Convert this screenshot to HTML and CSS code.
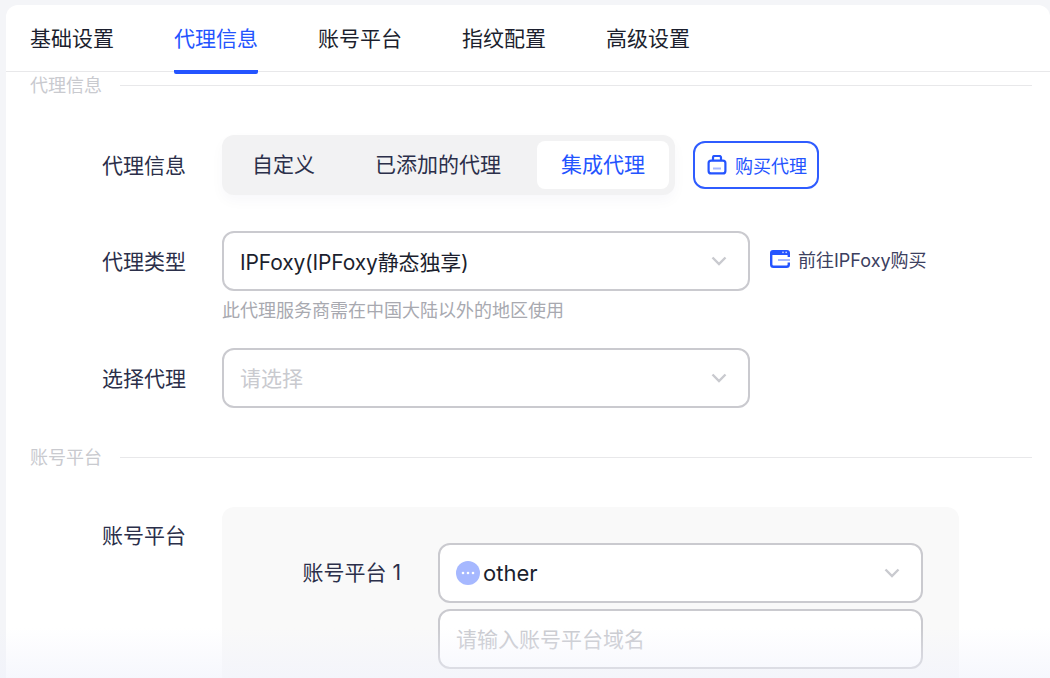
FILE: index.html
```html
<!DOCTYPE html>
<html lang="zh">
<head>
<meta charset="utf-8">
<title>代理信息</title>
<link rel="stylesheet" href="styles.css">
</head>
<body>
<main class="card">
  <nav class="tabs">
    <a class="tab">基础设置</a>
    <a class="tab active">代理信息</a>
    <a class="tab">账号平台</a>
    <a class="tab">指纹配置</a>
    <a class="tab">高级设置</a>
  </nav>
  <div class="content">
    <div class="divider first"><span>代理信息</span></div>
    <div class="row row-seg">
      <label class="label">代理信息</label>
      <div class="segment">
        <span class="seg seg-a">自定义</span>
        <span class="seg seg-b">已添加的代理</span>
        <span class="seg seg-c on">集成代理</span>
      </div>
      <button class="buy">
        <svg class="icon" width="20" height="20" viewBox="0 0 20 20" fill="none">
          <path d="M6 6V2.500A1.500 1.500 0 0 1 7.500 1h5A1.500 1.500 0 0 1 14 2.500V6" stroke="#2454ff" stroke-width="2.200"/>
          <rect x="1.600" y="5.600" width="16.800" height="12.800" rx="2.500" stroke="#2454ff" stroke-width="2.200"/>
          <rect x="6" y="12.500" width="8" height="2" fill="#a6b8ff"/>
        </svg>
        购买代理
      </button>
    </div>
    <div class="row row-type">
      <label class="label">代理类型</label>
      <div class="select">
        <span class="value tight">IPFoxy(IPFoxy静态独享)</span>
        <svg class="chev" width="16" height="10" viewBox="0 0 16 10" fill="none"><path d="M1.500 1.500 8 8l6.500-6.500" stroke="#c9cacf" stroke-width="2.400"/></svg>
      </div>
      <a class="goto">
        <svg class="icon" width="20" height="18" viewBox="0 0 20 18" fill="none">
          <path d="M1.200 3.500V14.500a2.300 2.300 0 0 0 2.300 2.300h13a2.300 2.300 0 0 0 2.300-2.300v-2" stroke="#2454ff" stroke-width="2.400"/>
          <path d="M18.800 4v3" stroke="#2454ff" stroke-width="2.400"/>
          <path d="M0 3a3 3 0 0 1 3-3h14a3 3 0 0 1 3 3v2H0z" fill="#2454ff"/>
          <circle cx="13" cy="2.300" r="0.900" fill="#c5d1ff"/>
          <circle cx="16.200" cy="2.300" r="0.900" fill="#c5d1ff"/>
          <rect x="8" y="9" width="12" height="2" fill="#a6b8ff"/>
        </svg>
        前往IPFoxy购买
      </a>
    </div>
    <p class="hint">此代理服务商需在中国大陆以外的地区使用</p>
    <div class="row row-pick">
      <label class="label">选择代理</label>
      <div class="select">
        <span class="placeholder">请选择</span>
        <svg class="chev" width="16" height="10" viewBox="0 0 16 10" fill="none"><path d="M1.500 1.500 8 8l6.500-6.500" stroke="#c9cacf" stroke-width="2.400"/></svg>
      </div>
    </div>
    <div class="divider second"><span>账号平台</span></div>
    <div class="row row-platform">
      <label class="label label-top">账号平台</label>
      <div class="panel">
        <div class="panel-row">
          <label class="sublabel">账号平台 1</label>
          <div class="stack">
            <div class="select small">
              <span class="value with-icon">
                <svg class="icon" width="24" height="24" viewBox="0 0 24 24"><circle cx="12" cy="12" r="12" fill="#a6b8ff"/><circle cx="7" cy="12" r="1.300" fill="#fff"/><circle cx="12" cy="12" r="1.300" fill="#fff"/><circle cx="17" cy="12" r="1.300" fill="#fff"/></svg>
                other
              </span>
              <svg class="chev" width="16" height="10" viewBox="0 0 16 10" fill="none"><path d="M1.500 1.500 8 8l6.500-6.500" stroke="#c9cacf" stroke-width="2.400"/></svg>
            </div>
            <div class="select small"><span class="placeholder">请输入账号平台域名</span></div>
          </div>
        </div>
      </div>
    </div>
  </div>
</main>
<div class="fade"></div>
</body>
</html>
```
FILE: styles.css
```css
* { box-sizing: border-box; }
html, body { margin: 0; height: 678px; overflow: hidden; }
body {
  background: #f4f5f8;
  padding: 5px 0 0 6px;
  font-family: Inter, "Noto Sans CJK SC", sans-serif;
  color: #2b2f4a;
  font-size: 21px;
}
.card {
  background: #fff;
  border-radius: 12px 12px 0 0;
  height: 673px;
  overflow: hidden;
}
.tabs {
  display: flex;
  gap: 60px;
  height: 67px;
  padding-left: 24px;
  border-bottom: 1px solid #e8e8ea;
}
.tab {
  height: 69px;
  line-height: 67px;
  color: #1c1f2e;
  border-bottom: 4px solid transparent;
}
.tab.active {
  color: #2454ff;
  border-bottom-color: #2454ff;
  border-radius: 2px;
}
.content { padding-left: 24px; padding-right: 18px; }
.divider {
  display: flex;
  align-items: center;
  gap: 18px;
  height: 26px;
  font-size: 18px;
  line-height: 24px;
  color: #c9cacf;
}
.divider span { padding-top: 2px; }
.divider::after {
  content: "";
  flex: 1;
  height: 1px;
  background: #e8e8ea;
}
.divider.second { margin-top: 36px; }
.row { display: flex; align-items: center; }
.row-seg { margin-top: 37px; }
.row-type { margin-top: 36px; }
.row-pick { margin-top: 18px; }
.row-platform { margin-top: 37px; align-items: flex-start; }
.label {
  width: 192px;
  padding: 0 0 2px 72px;
  flex: none;
  white-space: nowrap;
  color: #2b2f4a;
}
.label-top { line-height: 58px; padding-bottom: 0; }
.segment {
  display: flex;
  align-items: center;
  width: 453px;
  height: 60px;
  padding: 6px;
  background: #f2f2f3;
  border-radius: 12px;
  box-shadow: 0 6px 14px rgba(30, 40, 80, 0.03);
}
.seg { height: 48px; line-height: 48px; color: #2b2f4a; text-align: center; }
.seg-a { width: 111px; }
.seg-b { width: 198px; }
.seg-c { width: 132px; }
.seg.on { background: #fff; color: #2454ff; border-radius: 8px; }
.icon { flex: none; }
.buy {
  display: flex;
  align-items: center;
  gap: 8px;
  margin-left: 18px;
  width: 126px;
  height: 48px;
  padding: 0 0 0 12px;
  background: #fff;
  border: 2px solid #2f5cff;
  border-radius: 12px;
  color: #2454ff;
  font: inherit;
  font-size: 18px;
}
.select {
  display: flex;
  align-items: center;
  justify-content: space-between;
  width: 528px;
  height: 60px;
  padding: 0 21px 0 16px;
  background: #fff;
  border: 2px solid #cacacf;
  border-radius: 12px;
  flex: none;
}
.value { color: #1c1f2e; }
.tight { letter-spacing: -0.15px; }
.placeholder { color: #c9cacf; padding-bottom: 2px; }
.goto {
  display: flex;
  align-items: center;
  gap: 8px;
  margin-left: 20px;
  margin-top: -5px;
  font-size: 18px;
  color: #3c4060;
}
.hint {
  margin: 9px 0 0 192px;
  height: 30px;
  line-height: 22px;
  font-size: 18px;
  color: #a8a9b0;
}
.panel {
  width: 737px;
  height: 240px;
  padding: 36px 36px 0 0;
  background: #f9f9f9;
  border-radius: 12px;
}
.panel-row { display: flex; align-items: flex-start; }
.sublabel {
  width: 216px;
  padding-right: 37px;
  text-align: right;
  line-height: 60px;
  flex: none;
  color: #2b2f4a;
}
.stack { display: flex; flex-direction: column; gap: 6px; }
.select.small { width: 485px; }
.with-icon { display: flex; align-items: center; gap: 3px; font-size: 22px; }
.fade {
  position: absolute;
  left: 0;
  right: 0;
  bottom: 0;
  height: 50px;
  pointer-events: none;
  background: linear-gradient(to bottom, rgba(240, 242, 252, 0), rgba(240, 242, 252, 0.6));
}
```
